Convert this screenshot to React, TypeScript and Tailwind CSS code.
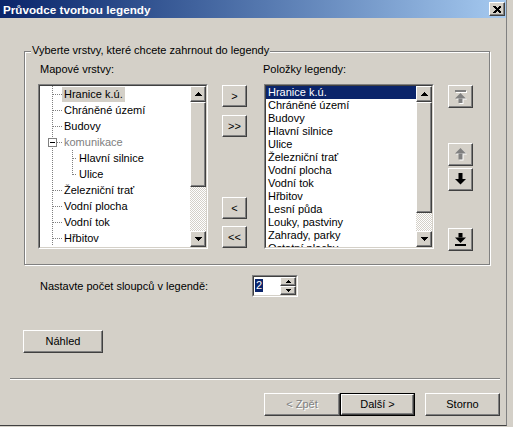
import React from "react";

const raised =
  "border border-t-white border-l-white border-r-[#404040] border-b-[#404040] shadow-[inset_-1px_-1px_0_#808080] bg-[#d4d0c8]";

function Btn({ children, className = "", disabled = false }: { children: React.ReactNode; className?: string; disabled?: boolean }) {
  return (
    <div
      className={`${raised} flex items-center justify-center ${disabled ? "text-[#808080] [text-shadow:1px_1px_0_#fff]" : "text-black"} ${className}`}
    >
      {children}
    </div>
  );
}

function Sunken({ children, className = "" }: { children: React.ReactNode; className?: string }) {
  return (
    <div className={`border border-t-[#808080] border-l-[#808080] border-r-white border-b-white ${className}`}>
      <div className="w-full h-full border border-t-[#404040] border-l-[#404040] border-r-[#d4d0c8] border-b-[#d4d0c8] bg-white flex overflow-hidden">
        {children}
      </div>
    </div>
  );
}

function Tri({ down = false }: { down?: boolean }) {
  return (
    <svg width="7" height="4" viewBox="0 0 7 4" shapeRendering="crispEdges">
      <polygon points={down ? "0,0 7,0 3.5,4" : "0,4 7,4 3.5,0"} fill="#000" />
    </svg>
  );
}

function Scrollbar({ thumb }: { thumb: number }) {
  return (
    <div className="w-[16px] h-full flex flex-col shrink-0">
      <div className={`${raised} h-[16px] flex items-center justify-center`}>
        <Tri />
      </div>
      <div className={raised} style={{ height: thumb }} />
      <div className="flex-1 bg-[repeating-conic-gradient(#d4d0c8_0%_25%,#ffffff_0%_50%)] bg-[length:2px_2px]" />
      <div className={`${raised} h-[16px] flex items-center justify-center`}>
        <Tri down />
      </div>
    </div>
  );
}

type Kind = "item" | "parent" | "child" | "lastChild";

function TreeLines({ kind }: { kind: Kind }) {
  const dot = { stroke: "#808080", strokeDasharray: "1 1", shapeRendering: "crispEdges" as const };
  const child = kind === "child" || kind === "lastChild";
  return (
    <svg width={child ? 37 : 22} height="16" className="shrink-0">
      <line x1="12.5" y1="0" x2="12.5" y2="16" {...dot} />
      {!child && <line x1="13" y1="8.5" x2="22" y2="8.5" {...dot} />}
      {kind === "parent" && (
        <g shapeRendering="crispEdges">
          <rect x="8.5" y="4.5" width="8" height="8" fill="#fff" stroke="#808080" />
          <line x1="10" y1="8.5" x2="15" y2="8.5" stroke="#000" />
        </g>
      )}
      {child && <line x1="32.5" y1="0" x2="32.5" y2={kind === "lastChild" ? 9 : 16} {...dot} />}
      {child && <line x1="33" y1="8.5" x2="37" y2="8.5" {...dot} />}
    </svg>
  );
}

const tree: { label: string; kind: Kind }[] = [
  { label: "Hranice k.ú.", kind: "item" },
  { label: "Chráněné území", kind: "item" },
  { label: "Budovy", kind: "item" },
  { label: "komunikace", kind: "parent" },
  { label: "Hlavní silnice", kind: "child" },
  { label: "Ulice", kind: "lastChild" },
  { label: "Železniční trať", kind: "item" },
  { label: "Vodní plocha", kind: "item" },
  { label: "Vodní tok", kind: "item" },
  { label: "Hřbitov", kind: "item" },
];

const legendItems = [
  "Hranice k.ú.",
  "Chráněné území",
  "Budovy",
  "Hlavní silnice",
  "Ulice",
  "Železniční trať",
  "Vodní plocha",
  "Vodní tok",
  "Hřbitov",
  "Lesní půda",
  "Louky, pastviny",
  "Zahrady, parky",
  "Ostatní plochy",
];

function ArrowIcon({ dir, bar = false, disabled = false }: { dir: "up" | "down"; bar?: boolean; disabled?: boolean }) {
  const fill = disabled ? "#808080" : "#000";
  const shape = (dx: number, dy: number, color: string) =>
    dir === "up" ? (
      <g transform={`translate(${dx},${dy})`} fill={color}>
        {bar && <rect x="0" y="0" width="11" height="2" />}
        <polygon points={bar ? "5.5,3 11,8.5 0,8.5" : "5.5,0 11,5.5 0,5.5"} />
        <rect x="3.5" y={bar ? 8.5 : 5.5} width="4" height={bar ? 4.5 : 6} />
      </g>
    ) : (
      <g transform={`translate(${dx},${dy})`} fill={color}>
        <rect x="3.5" y="0" width="4" height={bar ? 4.5 : 6} />
        <polygon points={bar ? "0,4.5 11,4.5 5.5,10" : "0,6 11,6 5.5,11.5"} />
        {bar && <rect x="0" y="11" width="11" height="2" />}
      </g>
    );
  return (
    <svg width="12" height="14" viewBox="0 0 12 14">
      {disabled && shape(1, 1, "#fff")}
      {shape(0, 0, fill)}
    </svg>
  );
}

export default function App() {
  return (
    <div className="w-[513px] h-[427px] bg-[#d4d0c8] overflow-hidden font-['Liberation_Sans',Arial,sans-serif] text-[11px] leading-[13px] text-black">
      <div className="w-[507px] h-[426px] border-r border-b border-r-[#808080] border-b-[#404040] flex flex-col">
        {/* Title bar */}
        <div className="h-[18px] shrink-0 flex items-center justify-between pl-[3px] pr-[1px] bg-gradient-to-r from-[#0a246a] to-[#a6caf0]">
          <span className="text-white font-bold text-[11.7px] leading-[14px] pt-[1px]">Průvodce tvorbou legendy</span>
          <div className={`${raised} w-[16px] h-[14px] flex items-center justify-center`}>
            <svg width="8" height="7" viewBox="0 0 8 7" shapeRendering="crispEdges">
              <path d="M0 0h2l2 2 2-2h2v1l-2.5 2.5L8 6v1H6L4 5 2 7H0V6l2.5-2.5L0 1z" fill="#000" />
            </svg>
          </div>
        </div>

        {/* Group box */}
        <div className="relative mt-[33px] ml-[24px] w-[466px] h-[214px] shrink-0 border border-[#808080] shadow-[1px_1px_0_#fff,inset_1px_1px_0_#fff]">
          <span className="absolute left-[6px] top-[-9px] px-[1px] bg-[#d4d0c8] leading-[14px]">
            Vyberte vrstvy, které chcete zahrnout do legendy
          </span>
          <div className="flex items-start">
            <div className="pl-[13px] pt-[11px]">
              <div className="ml-[2px] h-[13px]">Mapové vrstvy:</div>
              <Sunken className="mt-[8px] w-[170px] h-[165px]">
                <div className="flex-1 pl-[0px]">
                  {tree.map((t, i) => (
                    <div key={t.label} className="h-[16px] flex items-center">
                      <TreeLines kind={t.kind} />
                      <span
                        className={`px-[2px] h-[15px] leading-[15px] ${i === 0 ? "bg-[#d4d0c8]" : ""} ${t.kind === "parent" ? "text-[#808080]" : ""}`}
                      >
                        {t.label}
                      </span>
                    </div>
                  ))}
                </div>
                <Scrollbar thumb={85} />
              </Sunken>
            </div>

            <div className="ml-[14px] pt-[33px] flex flex-col">
              <Btn className="w-[25px] h-[22px]">&gt;</Btn>
              <Btn className="w-[25px] h-[22px] mt-[8px]">&gt;&gt;</Btn>
              <Btn className="w-[25px] h-[22px] mt-[60px]">&lt;</Btn>
              <Btn className="w-[25px] h-[22px] mt-[7px]">&lt;&lt;</Btn>
            </div>

            <div className="ml-[17px] pt-[11px]">
              <div className="h-[13px] -ml-[1px]">Položky legendy:</div>
              <Sunken className="mt-[8px] w-[170px] h-[165px]">
                <div className="flex-1">
                  {legendItems.map((t, i) => (
                    <div
                      key={t}
                      className={`h-[13px] leading-[13px] pl-[2px] whitespace-nowrap ${i === 0 ? "bg-[#0a246a] text-white" : ""}`}
                    >
                      {t}
                    </div>
                  ))}
                </div>
                <Scrollbar thumb={111} />
              </Sunken>
            </div>

            <div className="ml-[14px] pt-[33px] flex flex-col">
              <Btn className="w-[25px] h-[23px]">
                <ArrowIcon dir="up" bar disabled />
              </Btn>
              <Btn className="w-[25px] h-[23px] mt-[35px]">
                <ArrowIcon dir="up" disabled />
              </Btn>
              <Btn className="w-[25px] h-[23px] mt-[2px]">
                <ArrowIcon dir="down" />
              </Btn>
              <Btn className="w-[25px] h-[23px] mt-[37px]">
                <ArrowIcon dir="down" bar />
              </Btn>
            </div>
          </div>
        </div>

        {/* Columns */}
        <div className="mt-[10px] pl-[40px] flex items-center h-[22px] shrink-0">
          <span className="w-[212px]">Nastavte počet sloupců v legendě:</span>
          <Sunken className="w-[46px] h-[22px]">
            <div className="flex-1 pl-[1px] pt-[2px]">
              <span className="bg-[#0a246a] text-white px-[1px] leading-[13px] inline-block">2</span>
            </div>
            <div className="w-[16px] flex flex-col">
              <div className={`${raised} h-[9px] flex items-center justify-center`}>
                <svg width="5" height="3" viewBox="0 0 5 3" shapeRendering="crispEdges">
                  <polygon points="0,3 5,3 2.5,0" fill="#000" />
                </svg>
              </div>
              <div className={`${raised} h-[9px] flex items-center justify-center`}>
                <svg width="5" height="3" viewBox="0 0 5 3" shapeRendering="crispEdges">
                  <polygon points="0,0 5,0 2.5,3" fill="#000" />
                </svg>
              </div>
            </div>
          </Sunken>
        </div>

        <Btn className="mt-[33px] ml-[23px] w-[80px] h-[23px] shrink-0">Náhled</Btn>

        <div className="mt-[25px] ml-[10px] w-[490px] h-[2px] shrink-0 border-t border-t-[#808080] border-b border-b-white" />

        <div className="mt-[13px] pl-[264px] flex shrink-0">
          <Btn disabled className="w-[76px] h-[23px]">&lt; Zpět</Btn>
          <div className="w-[75px] h-[23px] border border-black">
            <Btn className="w-full h-full">Další &gt;</Btn>
          </div>
          <Btn className="ml-[10px] w-[75px] h-[23px]">Storno</Btn>
        </div>
      </div>
    </div>
  );
}
